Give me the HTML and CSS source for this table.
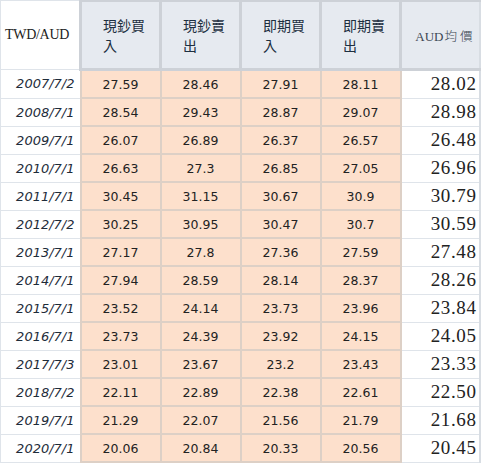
FILE: index.html
```html
<!DOCTYPE html>
<html lang="zh-Hant">
<head>
<meta charset="utf-8">
<link rel="stylesheet" href="styles.css">
</head>
<body>
<table class="rates">
<colgroup>
<col class="c-date"><col class="c-num"><col class="c-num"><col class="c-num"><col class="c-num"><col class="c-avg">
</colgroup>
<thead>
<tr>
<th class="h-pair">TWD/AUD</th>
<th class="h-col">現鈔買入</th>
<th class="h-col">現鈔賣出</th>
<th class="h-col">即期買入</th>
<th class="h-col">即期賣出</th>
<th class="h-avg">AUD<span class="cjk">均價</span></th>
</tr>
</thead>
<tbody>
<tr><td class="date">2007/7/2</td><td class="num">27.59</td><td class="num">28.46</td><td class="num">27.91</td><td class="num">28.11</td><td class="avg">28.02</td></tr>
<tr><td class="date">2008/7/1</td><td class="num">28.54</td><td class="num">29.43</td><td class="num">28.87</td><td class="num">29.07</td><td class="avg">28.98</td></tr>
<tr><td class="date">2009/7/1</td><td class="num">26.07</td><td class="num">26.89</td><td class="num">26.37</td><td class="num">26.57</td><td class="avg">26.48</td></tr>
<tr><td class="date">2010/7/1</td><td class="num">26.63</td><td class="num">27.3</td><td class="num">26.85</td><td class="num">27.05</td><td class="avg">26.96</td></tr>
<tr><td class="date">2011/7/1</td><td class="num">30.45</td><td class="num">31.15</td><td class="num">30.67</td><td class="num">30.9</td><td class="avg">30.79</td></tr>
<tr><td class="date">2012/7/2</td><td class="num">30.25</td><td class="num">30.95</td><td class="num">30.47</td><td class="num">30.7</td><td class="avg">30.59</td></tr>
<tr><td class="date">2013/7/1</td><td class="num">27.17</td><td class="num">27.8</td><td class="num">27.36</td><td class="num">27.59</td><td class="avg">27.48</td></tr>
<tr><td class="date">2014/7/1</td><td class="num">27.94</td><td class="num">28.59</td><td class="num">28.14</td><td class="num">28.37</td><td class="avg">28.26</td></tr>
<tr><td class="date">2015/7/1</td><td class="num">23.52</td><td class="num">24.14</td><td class="num">23.73</td><td class="num">23.96</td><td class="avg">23.84</td></tr>
<tr><td class="date">2016/7/1</td><td class="num">23.73</td><td class="num">24.39</td><td class="num">23.92</td><td class="num">24.15</td><td class="avg">24.05</td></tr>
<tr><td class="date">2017/7/3</td><td class="num">23.01</td><td class="num">23.67</td><td class="num">23.2</td><td class="num">23.43</td><td class="avg">23.33</td></tr>
<tr><td class="date">2018/7/2</td><td class="num">22.11</td><td class="num">22.89</td><td class="num">22.38</td><td class="num">22.61</td><td class="avg">22.50</td></tr>
<tr><td class="date">2019/7/1</td><td class="num">21.29</td><td class="num">22.07</td><td class="num">21.56</td><td class="num">21.79</td><td class="avg">21.68</td></tr>
<tr><td class="date">2020/7/1</td><td class="num">20.06</td><td class="num">20.84</td><td class="num">20.33</td><td class="num">20.56</td><td class="avg">20.45</td></tr>
</tbody>
</table>
</body>
</html>
```
FILE: styles.css
```css
html, body {
  margin: 0;
  padding: 0;
  background: #ffffff;
}

.rates {
  border-collapse: collapse;
  table-layout: fixed;
  width: 479px;
  margin-top: -1px;
}

.c-date { width: 80px; }
.c-num { width: 80px; }
.c-avg { width: 79px; }

.rates th,
.rates td {
  padding: 0;
  overflow: hidden;
}

.rates thead th {
  height: 66px;
  vertical-align: middle;
  font-weight: normal;
}

.rates .h-pair {
  background: #ffffff;
  border: 1px solid #dfe4ea;
  border-right: 3px solid #cdd1d7;
  text-align: left;
  padding-left: 4px;
  font-family: "Liberation Serif", "DejaVu Serif", serif;
  font-size: 14px;
  color: #222222;
  letter-spacing: -0.3px;
}

.rates .h-col {
  background: #e6eaf0;
  border: 3px solid #cdd1d7;
  text-align: left;
  padding: 0 6px 0 21px;
  font-family: "Noto Sans CJK TC", "Noto Sans", sans-serif;
  font-size: 14px;
  line-height: 20px;
  color: #1d2f40;
  word-break: break-all;
}

.rates .h-avg {
  background: #e6eaf0;
  border: 3px solid #cdd1d7;
  border-right: 2px solid #d8dde3;
  text-align: right;
  padding-right: 3px;
  font-family: "Liberation Serif", "DejaVu Serif", serif;
  font-size: 13px;
  color: #3b4653;
  white-space: nowrap;
}

.h-avg .cjk {
  font-family: "Noto Sans CJK TC", sans-serif;
  font-weight: 300;
  font-size: 12.5px;
  letter-spacing: 3px;
  margin-left: 1px;
}

.rates tbody td {
  height: 26px;
}

.rates .date {
  background: #ffffff;
  border: 1px solid #dfe4ea;
  text-align: right;
  padding-right: 5px;
  font-family: "DejaVu Sans", Verdana, sans-serif;
  font-style: italic;
  font-size: 13px;
  color: #1e2c3a;
}

.rates .num {
  background: #fde0cc;
  border: 2px solid #ddd0c6;
  text-align: center;
  font-family: "DejaVu Sans", Verdana, sans-serif;
  font-size: 12.5px;
  color: #222222;
}

.rates .avg {
  background: #ffffff;
  border: 1px solid #dfe4ea;
  border-right: 2px solid #d8dde3;
  text-align: right;
  padding-right: 2px;
  font-family: "Liberation Serif", "DejaVu Serif", serif;
  font-size: 19px;
  letter-spacing: 0.6px;
  color: #222222;
}
```
